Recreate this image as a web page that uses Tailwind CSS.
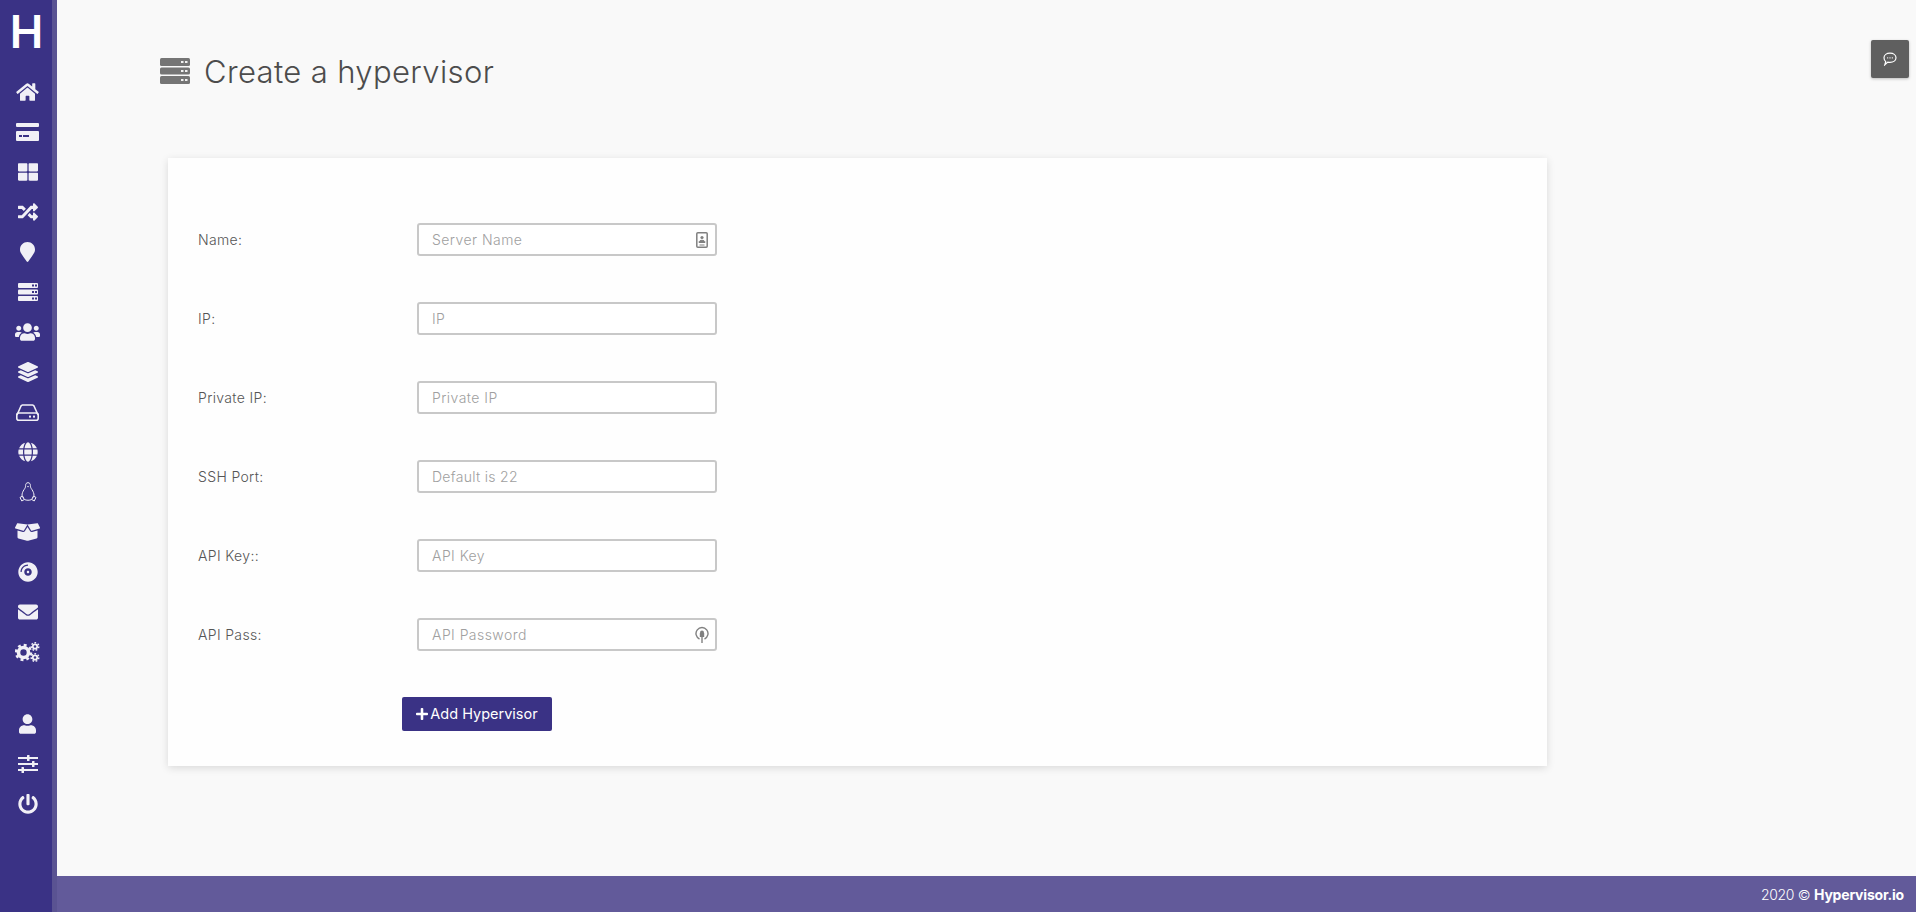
<!DOCTYPE html>
<html lang="en">

<head>
    <meta charset="UTF-8">
    <title>Create a hypervisor</title>
    <script src="https://cdn.jsdelivr.net/npm/@tailwindcss/browser@4"></script>
</head>

<body class="h-[912px] overflow-hidden bg-[#f9f9f9] font-['Inter',sans-serif] text-[#555]">
    <div class="flex h-full">
        <!-- sidebar -->
        <aside class="flex h-full w-[57px] shrink-0 flex-col items-center border-r-[5px] border-[#5a5392] bg-[#3a3285] pl-[3px] text-[#f1f0f6]">
            <div class="flex h-[72px] items-start pt-[2px] pr-[2px] text-[45px] leading-[60px] font-semibold text-white">H</div>
            <nav class="flex flex-col items-center">
                <a class="flex h-10 items-center"><svg class="w-[23px] h-[20px]" viewBox="0 0 576 512" fill="currentColor"><path d="M280.37 148.26L96 300.11V464a16 16 0 0 0 16 16l112.06-.29a16 16 0 0 0 15.92-16V368a16 16 0 0 1 16-16h64a16 16 0 0 1 16 16v95.64a16 16 0 0 0 16 16.05L464 480a16 16 0 0 0 16-16V300L295.67 148.26a12.19 12.19 0 0 0-15.3 0zM571.6 251.47L488 182.56V44.05a12 12 0 0 0-12-12h-56a12 12 0 0 0-12 12v72.61L318.47 43a48 48 0 0 0-61 0L4.34 251.47a12 12 0 0 0-1.6 16.9l25.5 31A12 12 0 0 0 45.15 301l235.22-193.74a12.19 12.19 0 0 1 15.3 0L530.9 301a12 12 0 0 0 16.9-1.6l25.5-31a12 12 0 0 0-1.7-16.93z"/></svg></a>
                <a class="flex h-10 items-center"><svg class="w-[23px] h-[18px]" viewBox="0 0 23 18" fill="currentColor"><rect width="23" height="4" rx="1"/><path d="M1 8h21a1 1 0 0 1 1 1v8a1 1 0 0 1-1 1H1a1 1 0 0 1-1-1V9a1 1 0 0 1 1-1z"/><rect x="3" y="12" width="3" height="2" fill="#3a3285"/><rect x="7" y="12" width="6" height="2" fill="#3a3285"/></svg></a>
                <a class="flex h-10 items-center"><svg class="w-5 h-5" viewBox="0 0 512 512" fill="currentColor"><path d="M296 32h192c13.255 0 24 10.745 24 24v160c0 13.255-10.745 24-24 24H296c-13.255 0-24-10.745-24-24V56c0-13.255 10.745-24 24-24zm-80 0H24C10.745 32 0 42.745 0 56v160c0 13.255 10.745 24 24 24h192c13.255 0 24-10.745 24-24V56c0-13.255-10.745-24-24-24zM0 296v160c0 13.255 10.745 24 24 24h192c13.255 0 24-10.745 24-24V296c0-13.255-10.745-24-24-24H24c-13.255 0-24 10.745-24 24zm296 184h192c13.255 0 24-10.745 24-24V296c0-13.255-10.745-24-24-24H296c-13.255 0-24 10.745-24 24v160c0 13.255 10.745 24 24 24z"/></svg></a>
                <a class="flex h-10 items-center"><svg class="w-5 h-5" viewBox="0 0 512 512" fill="currentColor"><path d="M504.971 359.029c9.373 9.373 9.373 24.569 0 33.941l-80 79.984c-15.01 15.01-40.971 4.49-40.971-16.971V416h-58.785a12.004 12.004 0 0 1-8.773-3.812l-70.556-75.596 53.333-57.143L352 336h32v-39.981c0-21.438 25.943-31.998 40.971-16.971l80 79.981zM12 176h84l52.781 56.551 53.333-57.143-70.556-75.596A11.999 11.999 0 0 0 122.785 96H12c-6.627 0-12 5.373-12 12v56c0 6.627 5.373 12 12 12zm372 0v39.984c0 21.46 25.961 31.98 40.971 16.971l80-79.984c9.373-9.373 9.373-24.569 0-33.941l-80-79.981C409.943 24.021 384 34.582 384 56.019V96h-58.785a12.004 12.004 0 0 0-8.773 3.812L96 336H12c-6.627 0-12 5.373-12 12v56c0 6.627 5.373 12 12 12h110.785c3.326 0 6.503-1.381 8.773-3.812L352 176h32z"/></svg></a>
                <a class="flex h-10 items-center"><svg class="w-[15px] h-5" viewBox="0 0 384 512" fill="currentColor"><path d="M172.268 501.67C26.97 291.031 0 268.413 0 192 0 85.961 85.961 0 192 0s192 85.961 192 192c0 76.413-26.97 99.031-172.268 309.67-9.535 13.774-29.93 13.773-39.464 0z"/></svg></a>
                <a class="flex h-10 items-center"><svg class="w-5 h-[18px]" viewBox="0 0 20 18" fill="currentColor"><rect width="20" height="5" rx="1"/><rect y="6.5" width="20" height="5" rx="1"/><rect y="13" width="20" height="5" rx="1"/><g fill="#3a3285"><rect x="14" y="1.5" width="2" height="2"/><rect x="17" y="1.5" width="2" height="2"/><rect x="14" y="8" width="2" height="2"/><rect x="17" y="8" width="2" height="2"/><rect x="14" y="14.5" width="2" height="2"/><rect x="17" y="14.5" width="2" height="2"/></g></svg></a>
                <a class="flex h-10 items-center"><svg class="w-[25px] h-5" viewBox="0 0 640 512" fill="currentColor"><path d="M96 224c35.3 0 64-28.7 64-64s-28.7-64-64-64-64 28.7-64 64 28.7 64 64 64zm448 0c35.3 0 64-28.7 64-64s-28.7-64-64-64-64 28.7-64 64 28.7 64 64 64zm32 32h-64c-17.6 0-33.5 7.1-45.1 18.6 40.3 22.1 68.9 62 75.1 109.4h66c17.7 0 32-14.3 32-32v-32c0-35.3-28.7-64-64-64zm-256 0c61.9 0 112-50.1 112-112S381.9 32 320 32 208 82.1 208 144s50.1 112 112 112zm76.8 32h-8.3c-20.8 10-43.9 16-68.5 16s-47.6-6-68.5-16h-8.3C179.6 288 128 339.6 128 403.2V432c0 26.5 21.5 48 48 48h288c26.5 0 48-21.5 48-48v-28.8c0-63.6-51.6-115.2-115.2-115.2zm-223.7-13.4C161.5 263.1 145.6 256 128 256H64c-35.3 0-64 28.7-64 64v32c0 17.7 14.3 32 32 32h65.9c6.3-47.4 34.9-87.3 75.2-109.4z"/></svg></a>
                <a class="flex h-10 items-center"><svg class="w-5 h-5" viewBox="0 0 512 512" fill="currentColor"><path d="M12.41 148.02l232.94 105.67c6.8 3.09 14.49 3.09 21.29 0l232.94-105.67c16.55-7.51 16.55-32.52 0-40.03L266.65 2.31a25.607 25.607 0 0 0-21.29 0L12.41 107.98c-16.55 7.51-16.55 32.53 0 40.04zm487.18 88.28l-58.09-26.33-161.64 73.27c-7.56 3.43-15.59 5.17-23.86 5.17s-16.29-1.74-23.86-5.17L70.51 209.97l-58.1 26.33c-16.55 7.5-16.55 32.5 0 40l232.94 105.59c6.8 3.08 14.49 3.08 21.29 0L499.59 276.3c16.55-7.5 16.55-32.5 0-40zm0 127.8l-57.87-26.23-161.86 73.37c-7.56 3.43-15.59 5.17-23.86 5.17s-16.29-1.74-23.86-5.17L70.29 337.87 12.41 364.1c-16.55 7.5-16.55 32.5 0 40l232.94 105.59c6.8 3.08 14.49 3.08 21.29 0L499.59 404.1c16.55-7.5 16.55-32.5 0-40z"/></svg></a>
                <a class="flex h-10 items-center"><svg class="w-[23px] h-[17px]" viewBox="0 0 23 17" fill="none" stroke="currentColor" stroke-width="1.6"><path d="M1 11 5 2a2 2 0 0 1 1.5-1h10A2 2 0 0 1 18 2l4 9"/><rect x="0.8" y="9" width="21.4" height="7.2" rx="2"/><rect x="13" y="11.6" width="2" height="2" fill="currentColor" stroke="none"/><rect x="17" y="11.6" width="2" height="2" fill="currentColor" stroke="none"/></svg></a>
                <a class="flex h-10 items-center"><svg class="w-5 h-5" viewBox="0 0 496 512" fill="currentColor"><path d="M336.5 160C322 70.7 287.8 8 248 8s-74 62.7-88.5 152h177zM152 256c0 22.2 1.2 43.5 3.3 64h185.3c2.1-20.5 3.3-41.8 3.3-64s-1.2-43.5-3.3-64H155.3c-2.1 20.5-3.3 41.8-3.3 64zm324.7-96c-28.6-67.9-86.5-120.4-158-141.6 24.4 33.8 41.2 84.7 50 141.6h108zM177.2 18.4C105.8 39.6 47.8 92.1 19.3 160h108c8.7-56.9 25.5-107.8 49.9-141.6zM487.4 192H372.7c2.1 21 3.3 42.5 3.3 64s-1.2 43-3.3 64h114.6c5.5-20.5 8.6-41.8 8.6-64s-3.1-43.5-8.5-64zM120 256c0-21.5 1.2-43 3.3-64H8.6C3.2 212.5 0 233.8 0 256s3.2 43.5 8.6 64h114.6c-2-21-3.2-42.5-3.2-64zm39.5 96c14.5 89.3 48.7 152 88.5 152s74-62.7 88.5-152h-177zm159.3 141.6c71.4-21.2 129.4-73.7 158-141.6h-108c-8.8 56.9-25.6 107.8-50 141.6zM19.3 352c28.6 67.9 86.5 120.4 158 141.6-24.4-33.8-41.2-84.7-50-141.6h-108z"/></svg></a>
                <a class="flex h-10 items-center"><svg class="w-[18px] h-5" viewBox="0 0 18 20" fill="none" stroke="currentColor" stroke-width="1"><path d="M9 .7c1.6 0 2.4 1.2 2.4 2.8 0 2 .6 2.7 1.6 4.2 1.2 1.8 2 3.8 2 5.6 0 1.4-.6 2-1.4 2.6M9 .7C7.4.7 6.6 1.9 6.6 3.5c0 2-.6 2.7-1.6 4.2-1.2 1.8-2 3.8-2 5.6 0 1.4.6 2 1.4 2.6"/><path d="M1 15.5 3.5 14l1.800 3.500-2.500 1.500zM17 15.500 14.500 14l-1.800 3.500 2.500 1.500zM5.300 17.500c2.400 1 5 1 7.400 0"/><path d="M8 4h2l-1 1.400z" fill="currentColor" stroke="none"/></svg></a>
                <a class="flex h-10 items-center"><svg class="w-[25px] h-5" viewBox="0 0 640 512" fill="currentColor"><path d="M425.7 256c-16.9 0-32.8-9-41.4-23.4L320 126l-64.2 106.6c-8.7 14.5-24.6 23.5-41.5 23.5-4.5 0-9-.6-13.3-1.9L64 215v178c0 14.7 10 27.5 24.2 31l216.2 54.1c10.2 2.5 20.9 2.5 31 0L551.8 424c14.2-3.6 24.2-16.4 24.2-31V215l-137 39.1c-4.3 1.3-8.8 1.9-13.3 1.9zm212.6-112.2L586.8 41c-3.1-6.2-9.8-9.8-16.7-8.9L320 64l91.7 152.1c3.8 6.3 11.4 9.3 18.5 7.3l197.9-56.5c9.9-2.9 14.7-13.9 10.2-23.1zM53.2 41L1.7 143.8c-4.6 9.2.3 20.2 10.1 23l197.9 56.5c7.1 2 14.7-1 18.5-7.3L320 64 69.8 32.1c-6.9-.8-13.5 2.7-16.6 8.9z"/></svg></a>
                <a class="flex h-10 items-center"><svg class="w-5 h-5" viewBox="0 0 496 512" fill="currentColor"><path d="M248 8C111 8 0 119 0 256s111 248 248 248 248-111 248-248S385 8 248 8zM88 256H56c0-105.9 86.1-192 192-192v32c-88.2 0-160 71.8-160 160zm160 96c-53 0-96-43-96-96s43-96 96-96 96 43 96 96-43 96-96 96zm0-128c-17.7 0-32 14.3-32 32s14.3 32 32 32 32-14.3 32-32-14.3-32-32-32z"/></svg></a>
                <a class="flex h-10 items-center"><svg class="w-5 h-5" viewBox="0 0 512 512" fill="currentColor"><path d="M502.3 190.8c3.9-3.1 9.7-.2 9.7 4.7V400c0 26.5-21.5 48-48 48H48c-26.5 0-48-21.5-48-48V195.6c0-5 5.7-7.8 9.7-4.7 22.4 17.4 52.1 39.5 154.1 113.6 21.1 15.4 56.7 47.8 92.2 47.6 35.7.3 72-32.8 92.3-47.6 102-74.1 131.6-96.3 154-113.7zM256 320c23.2.4 56.6-29.2 73.4-41.4 132.7-96.3 142.8-104.7 173.4-128.7 5.8-4.5 9.2-11.5 9.2-18.9v-19c0-26.5-21.5-48-48-48H48C21.5 64 0 85.5 0 112v19c0 7.4 3.4 14.3 9.2 18.9 30.6 23.9 40.7 32.4 173.4 128.7 16.8 12.2 50.2 41.8 73.4 41.4z"/></svg></a>
                <a class="flex h-10 items-center"><svg class="w-[25px] h-5" viewBox="0 0 25 20" fill="none" stroke="currentColor"><circle cx="8.5" cy="10.5" r="5" stroke-width="3.6"/><circle cx="8.5" cy="10.5" r="7.5" stroke-width="2.4" stroke-dasharray="2.9 2.99"/><circle cx="20" cy="4.5" r="2.2" stroke-width="1.8"/><circle cx="20" cy="4.5" r="3.8" stroke-width="1.5" stroke-dasharray="1.7 1.68"/><circle cx="20" cy="15.5" r="2.2" stroke-width="1.8"/><circle cx="20" cy="15.5" r="3.8" stroke-width="1.5" stroke-dasharray="1.7 1.68"/></svg></a>
            </nav>
            <nav class="mt-[32px] flex flex-col items-center">
                <a class="flex h-10 items-center"><svg class="w-[17px] h-5" viewBox="0 0 448 512" fill="currentColor"><path d="M224 256c70.7 0 128-57.3 128-128S294.7 0 224 0 96 57.3 96 128s57.3 128 128 128zm89.6 32h-16.7c-22.2 10.2-46.9 16-72.9 16s-50.6-5.8-72.9-16h-16.7C60.2 288 0 348.2 0 422.4V464c0 26.5 21.5 48 48 48h352c26.5 0 48-21.5 48-48v-41.6c0-74.2-60.2-134.4-134.4-134.4z"/></svg></a>
                <a class="flex h-10 items-center"><svg class="w-5 h-[18px]" viewBox="0 0 20 18" fill="currentColor"><rect y="2" width="20" height="2"/><rect x="9" y="0" width="2.5" height="6" rx=".5"/><rect y="8" width="20" height="2"/><rect x="14" y="6" width="2.5" height="6" rx=".5"/><rect y="14" width="20" height="2"/><rect x="3.5" y="12" width="2.5" height="6" rx=".5"/></svg></a>
                <a class="flex h-10 items-center"><svg class="w-5 h-5" viewBox="0 0 512 512" fill="currentColor"><path d="M400 54.1c63 45 104 118.6 104 201.9 0 136.8-110.8 247.7-247.5 248C120 504.3 8.2 393 8 256.4 7.9 173.1 48.9 99.3 111.8 54.2c11.7-8.3 28-4.8 35 7.7L162.6 90c5.9 10.5 3.1 23.8-6.6 31-41.5 30.8-68 79.6-68 134.9-.1 92.3 74.5 168.1 168 168.1 91.6 0 168.6-74.2 168-169.1-.3-51.8-24.7-101.8-68.1-134-9.7-7.2-12.4-20.5-6.5-30.9l15.8-28.1c7-12.4 23.2-16.1 34.8-7.8zM296 264V24c0-13.3-10.7-24-24-24h-32c-13.3 0-24 10.7-24 24v240c0 13.3 10.7 24 24 24h32c13.3 0 24-10.7 24-24z"/></svg></a>
            </nav>
        </aside>

        <div class="flex h-full min-w-0 flex-1 flex-col">
            <main class="relative flex-1 pt-[57px]">
                <!-- title -->
                <div class="ml-[103px] flex h-[28px] items-center gap-[14px]">
                    <svg class="w-[30px] h-[26px] shrink-0" viewBox="0 0 30 26" fill="#757575"><rect width="30" height="8" rx="1.5"/><rect y="9.5" width="30" height="7" rx="1.5"/><rect y="18" width="30" height="8" rx="1.5"/><g fill="#f1f1f1"><rect x="21" y="3" width="2.5" height="2"/><rect x="25" y="3" width="2.5" height="2"/><rect x="21" y="12" width="2.5" height="2"/><rect x="25" y="12" width="2.5" height="2"/><rect x="21" y="21" width="2.5" height="2"/><rect x="25" y="21" width="2.5" height="2"/></g></svg>
                    <h1 class="text-[31px] leading-none font-light tracking-[0.37px] text-[#4c4c4c]">Create a hypervisor</h1>
                </div>

                <!-- form card -->
                <form class="mt-[73px] ml-[111px] flex h-[608px] w-[1379px] flex-col gap-[46px] bg-[#fefefe] pt-[65px] pl-[30px] shadow-[0_2px_8px_rgba(0,0,0,0.13)]">
                    <div class="flex h-[33px] items-center">
                        <label class="w-[219px] text-[14px] font-light tracking-[0.35px] text-[#555]">Name:</label>
                        <div class="relative w-[300px]">
                            <input class="h-[33px] w-full rounded-[3px] border-2 border-[#c8c8c8] bg-white px-[13px] text-[14px] font-light tracking-[0.45px] placeholder:text-[#a0a0a0]" placeholder="Server Name">
                            <svg class="absolute top-[9px] right-[9px] w-[12px] h-[16px]" viewBox="0 0 12 16" fill="none" stroke="#808080" stroke-width="1.5"><rect x=".8" y=".8" width="10.4" height="14.4" rx="1"/><circle cx="6" cy="5.5" r="1.6" fill="#808080" stroke="none"/><path d="M3 10.500c0-3 6-3 6 0zM3.500 13h5" fill="#808080" stroke-width="1"/></svg>
                        </div>
                    </div>
                    <div class="flex h-[33px] items-center">
                        <label class="w-[219px] text-[14px] font-light tracking-[0.35px] text-[#555]">IP:</label>
                        <input class="h-[33px] w-[300px] rounded-[3px] border-2 border-[#c8c8c8] bg-white px-[13px] text-[14px] font-light tracking-[0.45px] placeholder:text-[#a0a0a0]" placeholder="IP">
                    </div>
                    <div class="flex h-[33px] items-center">
                        <label class="w-[219px] text-[14px] font-light tracking-[0.35px] text-[#555]">Private IP:</label>
                        <input class="h-[33px] w-[300px] rounded-[3px] border-2 border-[#c8c8c8] bg-white px-[13px] text-[14px] font-light tracking-[0.45px] placeholder:text-[#a0a0a0]" placeholder="Private IP">
                    </div>
                    <div class="flex h-[33px] items-center">
                        <label class="w-[219px] text-[14px] font-light tracking-[0.35px] text-[#555]">SSH Port:</label>
                        <input class="h-[33px] w-[300px] rounded-[3px] border-2 border-[#c8c8c8] bg-white px-[13px] text-[14px] font-light tracking-[0.3px] placeholder:text-[#a0a0a0]" placeholder="Default is 22">
                    </div>
                    <div class="flex h-[33px] items-center">
                        <label class="w-[219px] text-[14px] font-light tracking-[0.35px] text-[#555]">API Key::</label>
                        <input class="h-[33px] w-[300px] rounded-[3px] border-2 border-[#c8c8c8] bg-white px-[13px] text-[14px] font-light tracking-[0.45px] placeholder:text-[#a0a0a0]" placeholder="API Key">
                    </div>
                    <div class="flex h-[33px] items-center">
                        <label class="w-[219px] text-[14px] font-light tracking-[0.35px] text-[#555]">API Pass:</label>
                        <div class="relative w-[300px]">
                            <input class="h-[33px] w-full rounded-[3px] border-2 border-[#c8c8c8] bg-white px-[13px] text-[14px] font-light tracking-[0.45px] placeholder:text-[#a0a0a0]" placeholder="API Password">
                            <svg class="absolute top-[8px] right-[8px] w-[14px] h-[18px]" viewBox="0 0 14 18" fill="none" stroke="#808080" stroke-width="1.4"><path d="M4.500 13a6 6 0 1 1 5 0"/><circle cx="7" cy="6.500" r="2" fill="#808080" stroke="none"/><rect x="4.800" y="7" width="4.400" height="4" fill="#808080" stroke="none"/><path d="M7 11v6"/></svg>
                        </div>
                    </div>
                    <div class="ml-[204px]">
                        <button type="button" class="flex h-[34px] w-[150px] items-center justify-center gap-[2px] rounded-[2px] bg-[#3a3285] text-[14.5px] text-white">
                            <svg class="w-[12px] h-[14px]" viewBox="0 0 448 512" fill="currentColor"><path d="M416 208H272V64c0-17.67-14.33-32-32-32h-32c-17.67 0-32 14.33-32 32v144H32c-17.67 0-32 14.33-32 32v32c0 17.67 14.33 32 32 32h144v144c0 17.67 14.33 32 32 32h32c17.67 0 32-14.33 32-32V304h144c17.67 0 32-14.33 32-32v-32c0-17.67-14.33-32-32-32z"/></svg>
                            Add Hypervisor
                        </button>
                    </div>
                </form>

                <!-- chat toggle -->
                <button type="button" class="absolute top-[40px] right-[7px] flex h-[38px] w-[38px] items-center justify-center rounded-[2px] bg-[#5f5f5f] shadow-[0_1px_3px_rgba(0,0,0,0.25)]">
                    <svg class="w-[14px] h-[14px]" viewBox="0 0 14 14" fill="none" stroke="#fff" stroke-width="1.2"><path d="M7 1.2c3.3 0 6 1.9 6 4.600s-2.700 4.600-6 4.600c-.8 0-1.500-.1-2.200-.3L1.800 12.800l.9-3.200C1.600 8.700 1 7.300 1 5.800 1 3.100 3.700 1.200 7 1.200z"/><path d="M4.200 5.800h1M6.500 5.800h1M8.800 5.800h1" stroke-width="1.3"/></svg>
                </button>
            </main>
            <footer class="flex h-[36px] shrink-0 items-center justify-end bg-[#625a9a] pr-[12px] text-[14px] font-light tracking-[-0.3px] text-white">
                <span>2020 © <b class="font-bold tracking-[-0.2px]">Hypervisor.io</b></span>
            </footer>
        </div>
    </div>
</body>

</html>
